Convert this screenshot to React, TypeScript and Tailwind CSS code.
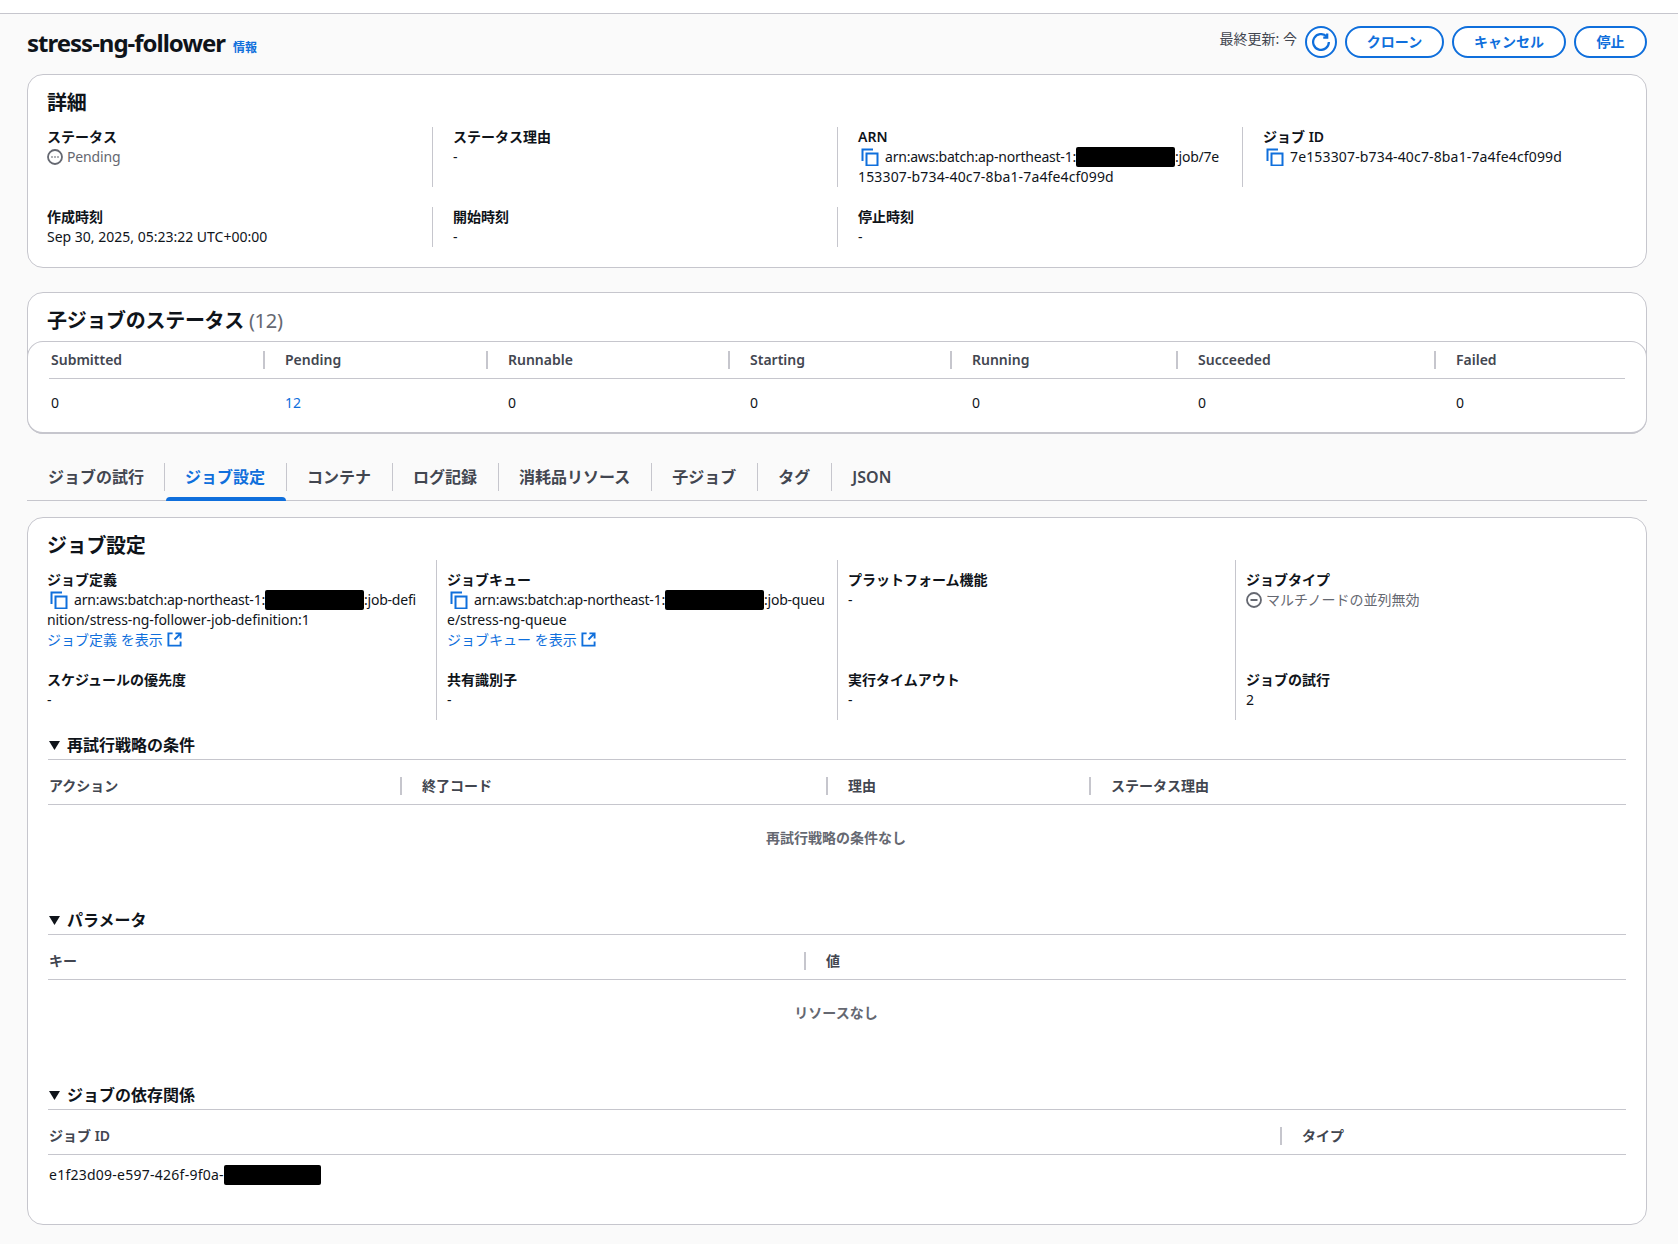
import React from "react";

const BLUE = "text-[#0f6fdc]";

function CopyIcon() {
  return (
    <svg viewBox="0 0 18 18" className="inline-block w-[18px] h-[18px] mr-[6px] ml-[3px] align-[-4px] text-[#0f6fdc]" fill="none" stroke="currentColor" strokeWidth="2">
      <path d="M1.5 13V1.5H12" />
      <rect x="5.5" y="5.5" width="11" height="12" />
    </svg>
  );
}

function ExternalIcon() {
  return (
    <svg viewBox="0 0 16 16" className="inline-block w-[15px] h-[15px] ml-[4px] align-[-2px] text-[#0f6fdc]" fill="none" stroke="currentColor" strokeWidth="2">
      <path d="M6 1.5H1.5v13h13V10" />
      <path d="M9 1.5h5.5V7M14.5 1.5 8 8" />
    </svg>
  );
}

function Redacted({ w }: { w: string }) {
  return <span className={`inline-block h-5 align-top bg-black rounded-[2px] ${w}`} />;
}

function Label({ children }: { children: React.ReactNode }) {
  return <div className="text-sm leading-5 font-semibold text-[#0f141a]">{children}</div>;
}

function Field({ label, children }: { label: string; children: React.ReactNode }) {
  return (
    <div>
      <Label>{label}</Label>
      <div className="text-sm leading-5 text-[#0f141a] whitespace-nowrap">{children}</div>
    </div>
  );
}

function Card({ children, className }: { children: React.ReactNode; className: string }) {
  return <section className={`bg-white border border-[#c6c6cd] rounded-2xl ${className}`}>{children}</section>;
}

function Heading({ children }: { children: React.ReactNode }) {
  return <h2 className="text-xl leading-6 -ml-px tracking-[-0.3px] font-semibold text-[#0f141a]">{children}</h2>;
}

function OutlineButton({ children, className }: { children: React.ReactNode; className: string }) {
  return (
    <button className={`h-8 rounded-full border-2 border-[#0f6fdc] bg-white text-sm leading-5 font-semibold ${BLUE} ${className}`}>
      {children}
    </button>
  );
}

function HeaderCell({ children, firstPad, last }: { children: React.ReactNode; firstPad?: string; last?: boolean }) {
  return (
    <div className={`flex items-center h-[18px] text-sm leading-5 font-semibold text-[#424650] ${firstPad ?? "pl-5"} ${last ? "" : "border-r-2 border-[#c6c6cd]"}`}>
      {children}
    </div>
  );
}

function CollapseSection({ title, columnsClass, headers, children, className }: { title: string; columnsClass: string; headers: string[]; children: React.ReactNode; className: string }) {
  return (
    <div className={className}>
      <div className="flex items-center h-6 gap-[7px] pl-[1px] text-base font-semibold text-[#0f141a]">
        <svg viewBox="0 0 11 9" className="w-[11px] h-[9px] text-[#0f141a]" fill="currentColor">
          <path d="M0 0h11L5.5 9z" />
        </svg>
        <span>{title}</span>
      </div>
      <div className="mt-[2px] border-t border-[#c6c6cd]" />
      <div className={`grid h-[45px] pt-[7px] items-center border-b border-[#c6c6cd] ${columnsClass}`}>
        {headers.map((h, i) => (
          <HeaderCell key={h} firstPad={i === 0 ? "pl-[1px]" : undefined} last={i === headers.length - 1}>
            {h}
          </HeaderCell>
        ))}
      </div>
      {children}
    </div>
  );
}

function EmptyRow({ children }: { children: React.ReactNode }) {
  return <div className="pt-[23px] pr-[2px] text-center text-sm leading-5 font-semibold text-[#656871]">{children}</div>;
}

const statusCols = ["Submitted", "Pending", "Runnable", "Starting", "Running", "Succeeded", "Failed"];
const tabs = ["ジョブの試行", "ジョブ設定", "コンテナ", "ログ記録", "消耗品リソース", "子ジョブ", "タグ", "JSON"];

export default function App() {
  return (
    <div className="min-h-[1244px] bg-[#fafafa] font-['Noto_Sans','Noto_Sans_CJK_JP',sans-serif] text-[#0f141a]">
      <div className="h-[14px] bg-white border-b border-[#c6c6cd]" />
      <div className="pl-[27px] pr-[31px]">
        <header className="flex justify-between h-[60px] pt-3">
          <div className="flex items-baseline gap-2 pt-[1px]">
            <h1 className="text-2xl leading-8 font-bold tracking-[-1px] text-[#0f141a]">stress-ng-follower</h1>
            <a className={`text-xs font-semibold ${BLUE}`}>情報</a>
          </div>
          <div className="flex items-start">
            <span className="text-sm leading-5 mt-[3px] mr-2 text-[#424650]">最終更新: 今</span>
            <button className="flex items-center justify-center w-8 h-8 rounded-full border-2 border-[#0f6fdc] bg-white mr-2">
              <svg viewBox="0 0 16 16" className={`w-[18px] h-[18px] ${BLUE}`} fill="none" stroke="currentColor" strokeWidth="2">
                <path d="M15 8a7 7 0 1 1-2-4.9" />
                <path d="M13.5 0.5V4H10" />
              </svg>
            </button>
            <OutlineButton className="w-[99px] mr-2">クローン</OutlineButton>
            <OutlineButton className="w-[114px] mr-2">キャンセル</OutlineButton>
            <OutlineButton className="w-[73px]">停止</OutlineButton>
          </div>
        </header>

        <Card className="h-[194px] pl-5 pt-[16px]">
          <Heading>詳細</Heading>
          <div className="-ml-px grid grid-cols-[385px_405px_405px_1fr] gap-y-5 mt-[12px]">
            <div className="h-[60px] pr-5">
              <Label>ステータス</Label>
              <div className="flex items-center gap-[4px] text-sm leading-5 text-[#656871]">
                <svg viewBox="0 0 16 16" className="w-4 h-4" fill="none" stroke="currentColor" strokeWidth="1.8">
                  <circle cx="8" cy="8" r="7" />
                  <path d="M4.5 8h1M7.5 8h1M10.5 8h1" strokeWidth="2" />
                </svg>
                <span className="tracking-[-0.15px]">Pending</span>
              </div>
            </div>
            <div className="border-l border-[#c6c6cd] pl-5 pr-5">
              <Field label="ステータス理由">-</Field>
            </div>
            <div className="border-l border-[#c6c6cd] pl-5 pr-5">
              <Field label="ARN">
                <CopyIcon />
                <span className="tracking-[-0.22px]">arn:aws:batch:ap-northeast-1:</span>
                <Redacted w="w-[99px]" />
                <span className="tracking-[-0.22px]">:job/7e</span>
                <br />
                <span className="tracking-[0.15px]">153307-b734-40c7-8ba1-7a4fe4cf099d</span>
              </Field>
            </div>
            <div className="border-l border-[#c6c6cd] pl-5">
              <Field label="ジョブ ID">
                <CopyIcon />
                <span className="tracking-[0.15px]">7e153307-b734-40c7-8ba1-7a4fe4cf099d</span>
              </Field>
            </div>
            <div className="h-10">
              <Field label="作成時刻">Sep 30, 2025, 05:23:22 UTC+00:00</Field>
            </div>
            <div className="border-l border-[#c6c6cd] pl-5">
              <Field label="開始時刻">-</Field>
            </div>
            <div className="border-l border-[#c6c6cd] pl-5">
              <Field label="停止時刻">-</Field>
            </div>
          </div>
        </Card>

        <Card className="mt-[24px] pt-[16px]">
          <div className="pl-5">
            <Heading>
              子ジョブのステータス <span className="font-normal text-[#656871]">(12)</span>
            </Heading>
          </div>
          <div className="mt-[8px] -mx-px -mb-px h-[93px] rounded-2xl border border-[#c6c6cd] border-b-2 bg-white pl-[21px] pr-[21px]">
            <div className="grid grid-cols-[216px_223px_242px_222px_226px_258px_1fr] h-[37px] pt-[9px] border-b border-[#c6c6cd]">
              {statusCols.map((c, i) => (
                <HeaderCell key={c} firstPad={i === 0 ? "pl-[2px]" : undefined} last={i === statusCols.length - 1}>
                  {c}
                </HeaderCell>
              ))}
            </div>
            <div className="grid grid-cols-[216px_223px_242px_222px_226px_258px_1fr] pt-[14px] text-sm leading-5">
              {statusCols.map((c, i) => (
                <div key={c} className={`${i === 0 ? "pl-[2px]" : "pl-5"} ${i === 1 ? BLUE : "text-[#0f141a]"}`}>
                  {i === 1 ? "12" : "0"}
                </div>
              ))}
            </div>
          </div>
        </Card>

        <nav className="flex mt-[29px] h-[38px] border-b border-[#c6c6cd]">
          {tabs.map((t, i) => (
            <div key={t} className={`relative flex items-start h-[37px] ${i === 0 ? "pl-[21px] pr-[20px]" : "px-[21px]"}`}>
              {i > 0 && <span className="absolute left-0 top-0 w-px h-[28px] bg-[#c6c6cd]" />}
              <span className={`text-base leading-7 font-semibold ${i === 1 ? BLUE : "text-[#424650]"}`}>{t}</span>
              {i === 1 && <span className="absolute left-[2px] right-0 bottom-[-1px] h-1 rounded-t-sm bg-[#0f6fdc]" />}
            </div>
          ))}
        </nav>

        <Card className="mt-[16px] h-[708px] pl-5 pr-5 pt-[16px]">
          <Heading>ジョブ設定</Heading>
          <div className="-ml-px grid grid-cols-[389px_401px_398px_1fr] mt-[2px] h-40">
            <div className="flex flex-col gap-5 py-[10px] pr-[10px]">
              <div className="h-20">
                <Field label="ジョブ定義">
                  <CopyIcon />
                  <span className="tracking-[-0.22px]">arn:aws:batch:ap-northeast-1:</span>
                  <Redacted w="w-[99px]" />
                  <span className="tracking-[-0.22px]">:job-defi</span>
                  <br />
                  <span className="tracking-[-0.08px]">nition/stress-ng-follower-job-definition:1</span>
                </Field>
                <a className={`block text-sm leading-5 ${BLUE}`}>
                  ジョブ定義 を表示
                  <ExternalIcon />
                </a>
              </div>
              <Field label="スケジュールの優先度">-</Field>
            </div>
            <div className="flex flex-col gap-5 border-l border-[#c6c6cd] py-[10px] px-[10px]">
              <div className="h-20">
                <Field label="ジョブキュー">
                  <CopyIcon />
                  <span className="tracking-[-0.22px]">arn:aws:batch:ap-northeast-1:</span>
                  <Redacted w="w-[99px]" />
                  <span className="tracking-[-0.22px]">:job-queu</span>
                  <br />
                  <span>e/stress-ng-queue</span>
                </Field>
                <a className={`block text-sm leading-5 ${BLUE}`}>
                  ジョブキュー を表示
                  <ExternalIcon />
                </a>
              </div>
              <Field label="共有識別子">-</Field>
            </div>
            <div className="flex flex-col gap-5 border-l border-[#c6c6cd] py-[10px] px-[10px]">
              <div className="h-20">
                <Field label="プラットフォーム機能">-</Field>
              </div>
              <Field label="実行タイムアウト">-</Field>
            </div>
            <div className="flex flex-col gap-5 border-l border-[#c6c6cd] py-[10px] px-[10px]">
              <div className="h-20">
                <Label>ジョブタイプ</Label>
                <div className="flex items-center gap-[4px] text-sm leading-5 text-[#656871]">
                  <svg viewBox="0 0 16 16" className="w-4 h-4" fill="none" stroke="currentColor" strokeWidth="1.8">
                    <circle cx="8" cy="8" r="7" />
                    <path d="M4.5 8h7" strokeWidth="2" />
                  </svg>
                  <span>マルチノードの並列無効</span>
                </div>
              </div>
              <Field label="ジョブの試行">2</Field>
            </div>
          </div>

          <CollapseSection
            className="mt-[13px] h-[175px]"
            title="再試行戦略の条件"
            columnsClass="grid-cols-[354px_426px_263px_1fr]"
            headers={["アクション", "終了コード", "理由", "ステータス理由"]}
          >
            <EmptyRow>再試行戦略の条件なし</EmptyRow>
          </CollapseSection>

          <CollapseSection
            className="h-[175px]"
            title="パラメータ"
            columnsClass="grid-cols-[758px_1fr]"
            headers={["キー", "値"]}
          >
            <EmptyRow>リソースなし</EmptyRow>
          </CollapseSection>

          <CollapseSection
            title="ジョブの依存関係"
            className=""
            columnsClass="grid-cols-[1234px_1fr]"
            headers={["ジョブ ID", "タイプ"]}
          >
            <div className="pt-[10px] pl-[1px] text-sm leading-5 text-[#0f141a]">
              <span className="tracking-[0.25px]">e1f23d09-e597-426f-9f0a-</span>
              <Redacted w="w-[97px]" />
            </div>
          </CollapseSection>
        </Card>
      </div>
    </div>
  );
}
